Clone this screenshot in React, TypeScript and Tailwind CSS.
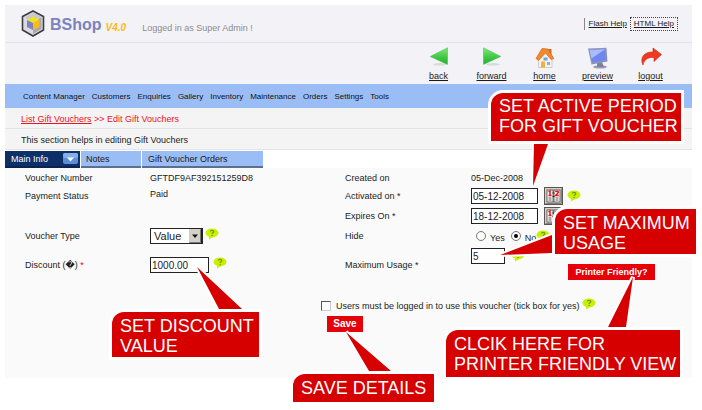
import React, { useState } from "react";

const menu = [
  "Content Manager",
  "Customers",
  "Enquiries",
  "Gallery",
  "Inventory",
  "Maintenance",
  "Orders",
  "Settings",
  "Tools",
];

function Logo() {
  return (
    <svg width="24" height="27" viewBox="0 0 24 27" aria-hidden="true">
      <path d="M12 1 L22.5 6.5 V20 L12 26 L1.5 20 V6.5 Z" fill="#d9d9dd" stroke="#3c3c44" strokeWidth="1.6" />
      <path d="M12 3 L20.5 7.5 V19 L12 24 Z" fill="#a9a9b2" />
      <path d="M12 3 L3.5 7.5 V19 L12 24 Z" fill="#dcdce0" />
      <path d="M12 3 L20.5 7.5 L12 12 L3.5 7.5 Z" fill="#c9c9cf" />
      <path d="M12 6.500 L18.5 10 L12 13 L6 10 Z" fill="#efe31a" />
      <path d="M6 10 L12 13 V20 L6 17 Z" fill="#7c83c4" />
      <path d="M18.5 10 L12 13 V20 L18.5 17 Z" fill="#fdbb14" />
    </svg>
  );
}

function TriangleIcon({ flip }: { flip?: boolean }) {
  return (
    <svg width="20" height="20" viewBox="0 0 20 20" aria-hidden="true">
      <defs>
        <linearGradient id="leaf" x1="0" y1="0" x2="0" y2="1">
          <stop offset="0" stopColor="#86e680" />
          <stop offset="0.5" stopColor="#45cc48" />
          <stop offset="1" stopColor="#24ab32" />
        </linearGradient>
      </defs>
      <ellipse cx="11" cy="17.3" rx="7" ry="1.3" fill="#d4dcd6" />
      <path
        d={flip ? "M1.500 0.800 V17.400 L18.800 9.500 Z" : "M18.500 0.800 V17.400 L1.200 9.500 Z"}
        fill="url(#leaf)"
        stroke="#3fbb48"
        strokeWidth="0.5"
      />
    </svg>
  );
}

function HomeIcon() {
  return (
    <svg width="20" height="22" viewBox="0 0 20 22" aria-hidden="true">
      <path d="M3.500 10 L10 5 L17 10 V20.500 H3.500 Z" fill="#f6f3f0" stroke="#c9c2be" strokeWidth="0.8" />
      <rect x="13.500" y="2" width="3" height="6" fill="#d9641c" />
      <path d="M1 11.500 L7 1.500 L13 2 L18.800 11.500 L16 12.500 L10.500 6 L3.500 13.500 Z" fill="#f08a2c" stroke="#d4671a" strokeWidth="0.7" />
      <rect x="8.500" y="10.500" width="4" height="3" fill="#6f9fe6" />
      <rect x="6" y="14.500" width="4" height="6" fill="#f0b23c" />
      <rect x="12" y="15" width="3" height="3" fill="#86aee8" />
    </svg>
  );
}

function PreviewIcon() {
  return (
    <svg width="22" height="22" viewBox="0 0 22 22" aria-hidden="true">
      <ellipse cx="13" cy="20" rx="7" ry="1.600" fill="#9a9eb2" />
      <path d="M10 16 L15 15 L17 20 L10 20 Z" fill="#7d8299" />
      <path d="M1 1.500 L19.500 0.800 L20.500 14.500 L4.500 17.500 Z" fill="#8f93b8" />
      <path d="M2.500 3 L18 2.300 L18.800 13 L5.500 15.600 Z" fill="#6d86f0" />
      <path d="M2.500 3 L18 2.300 L4.500 11.500 Z" fill="#a9bcff" />
    </svg>
  );
}

function LogoutIcon() {
  return (
    <svg width="22" height="20" viewBox="0 0 22 20" aria-hidden="true">
      <path
        d="M13 1 L21.500 7.500 L14 14.500 V10.500 C8 10 4 12.500 3 18 C-0.500 11 4 4.500 13 5 Z"
        fill="#ee3a22"
        stroke="#c9220f"
        strokeWidth="0.6"
      />
    </svg>
  );
}

function HelpIcon({ className = "" }: { className?: string }) {
  return (
    <button type="button" aria-label="Help" className={`h-3 w-3.5 shrink-0 ${className}`}>
      <svg width="14" height="12" viewBox="0 0 14 12" aria-hidden="true">
        <ellipse cx="7" cy="4.800" rx="6.500" ry="4.400" fill="#c8f000" />
        <path d="M4 8.500 L4 11.500 L8 9 Z" fill="#c8f000" />
        <path d="M5.300 3.600 C5.300 1.900 8.800 1.900 8.800 3.700 C8.800 4.900 7.100 4.700 7.100 6" fill="none" stroke="#6f9a1a" strokeWidth="1.200" />
        <rect x="6.500" y="6.900" width="1.300" height="1.200" fill="#6f9a1a" />
      </svg>
    </button>
  );
}

function CalendarButton({ label }: { label: string }) {
  return (
    <button type="button" aria-label={label} className="h-[18px] w-[19px] shrink-0">
      <svg width="19" height="18" viewBox="0 0 19 18" aria-hidden="true">
        <rect x="0.500" y="0.500" width="18" height="17" fill="#d2ceca" stroke="#5a5654" />
        <path d="M1.500 16.500 H17.500 V1.500" fill="none" stroke="#86817e" />
        <rect x="3" y="3" width="6" height="12" fill="#fff" stroke="#4a4644" strokeWidth="0.800" />
        <rect x="10" y="3" width="6" height="12" fill="#fff" stroke="#4a4644" strokeWidth="0.800" />
        <path d="M4.500 5 L6 4 V8.500 M4.500 8.500 H7.500" stroke="#e01818" strokeWidth="1.500" fill="none" />
        <path d="M11.500 5 C12 3.800 14.500 4 14.300 5.500 L11.600 8.400 H14.800" stroke="#e01818" strokeWidth="1.500" fill="none" />
        <path d="M4.500 11 H7.500 M4.500 13 H7.500 M11.500 11 H14.500 M11.500 13 H14.500" stroke="#5a5654" strokeWidth="1" />
        <path d="M8.500 6 H10.500 M8.500 9.500 H10.500" stroke="#222" />
      </svg>
    </button>
  );
}

const tools = [
  { label: "back", icon: <TriangleIcon /> },
  { label: "forward", icon: <TriangleIcon flip /> },
  { label: "home", icon: <HomeIcon /> },
  { label: "preview", icon: <PreviewIcon /> },
  { label: "logout", icon: <LogoutIcon /> },
];

function Callout({
  lines,
  tail,
  className,
}: {
  lines: string[];
  tail: string;
  className: string;
}) {
  return (
    <aside
      className={`absolute rounded-tl-xl bg-[#d60000] pl-2 text-lg leading-5 whitespace-nowrap text-white ring-[3px] ring-white ${className}`}
    >
      <svg className="pointer-events-none absolute top-0 left-0 overflow-visible" width="1" height="1" aria-hidden="true">
        <polygon points={tail} fill="#d60000" stroke="#fff" strokeWidth="4" paintOrder="stroke" />
      </svg>
      {lines.map((line) => (
        <p key={line}>{line}</p>
      ))}
    </aside>
  );
}

const field =
  "h-4 border border-[#222] bg-white pl-px text-[10px] leading-3 text-[#222] outline-none";
const radio =
  "size-[10px] appearance-none rounded-full border border-[#777] bg-white bg-clip-content p-[2px] checked:bg-black";

export default function App() {
  const [type, setType] = useState("Value");
  const [hide, setHide] = useState("No");

  return (
    <div className="relative bg-white pt-[5px] pr-2.5 pb-8 pl-[5px] font-['Liberation_Sans',Arial,sans-serif] text-[9px] leading-3 text-[#1a1a1a]">
      <header className="bg-[#f2f2f7]">
        <div className="flex h-[38px] items-center border-b border-[#e2e2e8] pr-3.5 pl-4">
          <Logo />
          <h1 className="mt-0.5 ml-[5px] text-base leading-5 font-bold text-[#7c83bd]">BShop</h1>
          <span className="mt-2 ml-1 text-[10px] font-bold text-[#fdb913] italic">V4.0</span>
          <span className="mt-2 ml-4 text-[#8c8c92]">Logged in as Super Admin !</span>
          <div className="ml-auto flex items-center text-[8px]">
            <a href="#flash" className="border-l border-[#888] pr-[3px] pl-1 underline">
              Flash Help
            </a>
            <a href="#html" className="border border-dotted border-[#444] px-[3px] underline">
              HTML Help
            </a>
          </div>
        </div>
        <nav className="flex h-[41px] justify-end pt-1 pr-[15px]">
          {tools.map((t) => (
            <a key={t.label} href={`#${t.label}`} className="flex w-[53px] flex-col items-center underline">
              <span className="flex h-[23px] items-start">{t.icon}</span>
              {t.label}
            </a>
          ))}
        </nav>
      </header>

      <nav className="flex h-6 items-center gap-[7px] bg-[#9bbdf5] pt-0.5 pl-[18px] text-[8px] text-[#111]">
        {menu.map((m) => (
          <a key={m} href={`#${m}`}>
            {m}
          </a>
        ))}
      </nav>

      <div className="border-b border-[#e4e4e4] bg-[#f4f4f4] pt-[5px] pb-[3px] pl-4 text-[#ee1122]">
        <a href="#list" className="underline">
          List Gift Vouchers
        </a>{" "}
        &gt;&gt; Edit Gift Vouchers
      </div>
      <p className="border-b border-[#e4e4e4] bg-[#f4f4f4] pt-[5px] pb-[3px] pl-4">This section helps in editing Gift Vouchers</p>

      <div role="tablist" className="mt-px flex h-[17px] gap-px">
        <button type="button" role="tab" aria-selected="true" className="flex w-[75px] items-center justify-between border-b-2 border-[#0a2350] bg-[#0e3068] pr-0.5 pl-1.5 text-white">
          Main Info
          <svg width="15" height="11" viewBox="0 0 15 11" aria-hidden="true">
            <rect width="15" height="11" rx="2" fill="#5a8fd8" />
            <rect width="15" height="5" rx="2" fill="#84b0ea" />
            <path d="M4 4.500 H11 L7.500 8.500 Z" fill="#fff" />
          </svg>
        </button>
        <button type="button" role="tab" aria-selected="false" className="w-[60px] border-b-2 border-[#5b6f92] bg-[#9bbdf5] pl-[5px] text-left">
          Notes
        </button>
        <button type="button" role="tab" aria-selected="false" className="w-[121px] border-b-2 border-[#5b6f92] bg-[#9bbdf5] pl-1.5 text-left">
          Gift Voucher Orders
        </button>
      </div>

      <form className="bg-[#fafafa] pb-[46px]" onSubmit={(e) => e.preventDefault()}>
        <div className="grid grid-cols-[125px_195px_126px_1fr] grid-rows-[18px_20px_20px_20px_38px] items-center pl-5">
          <span className="pt-0.5">Voucher Number</span>
          <span className="pt-0.5">GFTDF9AF392151259D8</span>
          <span className="pt-0.5">Created on</span>
          <span className="pt-0.5">05-Dec-2008</span>

          <span>Payment Status</span>
          <span className="self-start pt-0.5">Paid</span>
          <label htmlFor="activated">Activated on *</label>
          <div className="flex items-center">
            <input id="activated" defaultValue="05-12-2008" className={`${field} w-[67px]`} />
            <span className="ml-1.5 flex">
              <CalendarButton label="Pick activation date" />
            </span>
            <HelpIcon className="ml-1" />
          </div>

          <label htmlFor="expires" className="col-start-3">
            Expires On *
          </label>
          <div className="flex items-center">
            <input id="expires" defaultValue="18-12-2008" className={`${field} w-[67px]`} />
            <span className="ml-1.5 flex">
              <CalendarButton label="Pick expiry date" />
            </span>
          </div>

          <label htmlFor="type">Voucher Type</label>
          <div className="flex items-center gap-0.5">
            <div className="relative">
              <select
                id="type"
                value={type}
                onChange={(e) => setType(e.target.value)}
                className="block h-4 w-[53px] appearance-none border border-r-2 border-[#222] bg-white pl-[3px] text-[11px] leading-3 text-[#222]"
              >
                <option>Value</option>
                <option>Percent</option>
              </select>
              <svg className="pointer-events-none absolute top-px right-0.5" width="12" height="14" viewBox="0 0 12 14" aria-hidden="true">
                <rect width="12" height="14" fill="#d4d0c8" />
                <path d="M0.500 13.500 H11.500 V0.500" fill="none" stroke="#777" />
                <path d="M3 5.500 H9 L6 9 Z" fill="#111" />
              </svg>
            </div>
            <HelpIcon className="mb-1" />
          </div>
          <span>Hide</span>
          <div role="radiogroup" aria-label="Hide" className="flex items-center pl-[5px]">
            <input id="yes" type="radio" name="hide" checked={hide === "Yes"} onChange={() => setHide("Yes")} className={radio} />
            <label htmlFor="yes" className="mt-1 mr-1.5 ml-1">
              Yes
            </label>
            <input id="no" type="radio" name="hide" checked={hide === "No"} onChange={() => setHide("No")} className={radio} />
            <label htmlFor="no" className="mt-1 ml-1">
              No
            </label>
            <HelpIcon />
          </div>

          <label htmlFor="discount">
            Discount (<span className="font-['DejaVu_Sans',sans-serif]">{"\uFFFD"}</span>) <span className="text-red-600">*</span>
          </label>
          <div className="flex items-center gap-1">
            <input id="discount" defaultValue="1000.00" className={`${field} w-[59px]`} />
            <HelpIcon className="mb-1" />
          </div>
          <label htmlFor="usage">Maximum Usage *</label>
          <div className="flex items-start self-start pt-0.5">
            <input id="usage" defaultValue="5" className={`${field} w-[34px]`} />
            <HelpIcon className="mt-0.5 ml-1.5" />
            <button type="button" className="mt-4 ml-[43px] h-4 w-[87px] bg-[#e6000a] font-bold text-white">
              Printer Friendly?
            </button>
          </div>
        </div>

        <div className="flex items-center pt-3.5 pb-0.5 pl-[316px]">
          <input
            id="login"
            type="checkbox"
            className="size-[10px] appearance-none border border-t-[#555] border-r-[#ccc] border-b-[#ccc] border-l-[#555] bg-white checked:bg-[#555]"
          />
          <label htmlFor="login" className="ml-[5px]">
            Users must be logged in to use this voucher (tick box for yes)
          </label>
          <HelpIcon className="mb-1 ml-0.5" />
        </div>
        <button type="submit" className="ml-[322px] block h-4 w-9 bg-[#e6000a] text-[10px] leading-3 font-bold text-white">
          Save
        </button>
      </form>

      <Callout
        lines={["SET ACTIVE PERIOD", "FOR GIFT VOUCHER"]}
        tail="43,51 57,51 42,93"
        className="top-[93px] left-[491px] h-12 w-[190px] pt-[3px]"
      />
      <Callout
        lines={["SET MAXIMUM", "USAGE"]}
        tail="-3,26 -3,44 -55,46"
        className="top-[209px] left-[555px] h-[45px] w-[141px] pt-1"
      />
      <Callout
        lines={["SET DISCOUNT", "VALUE"]}
        tail="107,-3 130,-3 85,-45"
        className="top-[312px] left-[112px] h-[45px] w-[147px] pt-1"
      />
      <Callout
        lines={["SAVE DETAILS"]}
        tail="76,-3 98,-3 53,-42"
        className="top-[374px] left-[293px] h-7 w-[141px] pt-1"
      />
      <Callout
        lines={["CLCIK HERE FOR", "PRINTER FRIENDLY VIEW"]}
        tail="162,-3 180,-3 187,-53"
        className="top-[330px] left-[446px] h-[47px] w-[234px] pt-1"
      />
    </div>
  );
}
